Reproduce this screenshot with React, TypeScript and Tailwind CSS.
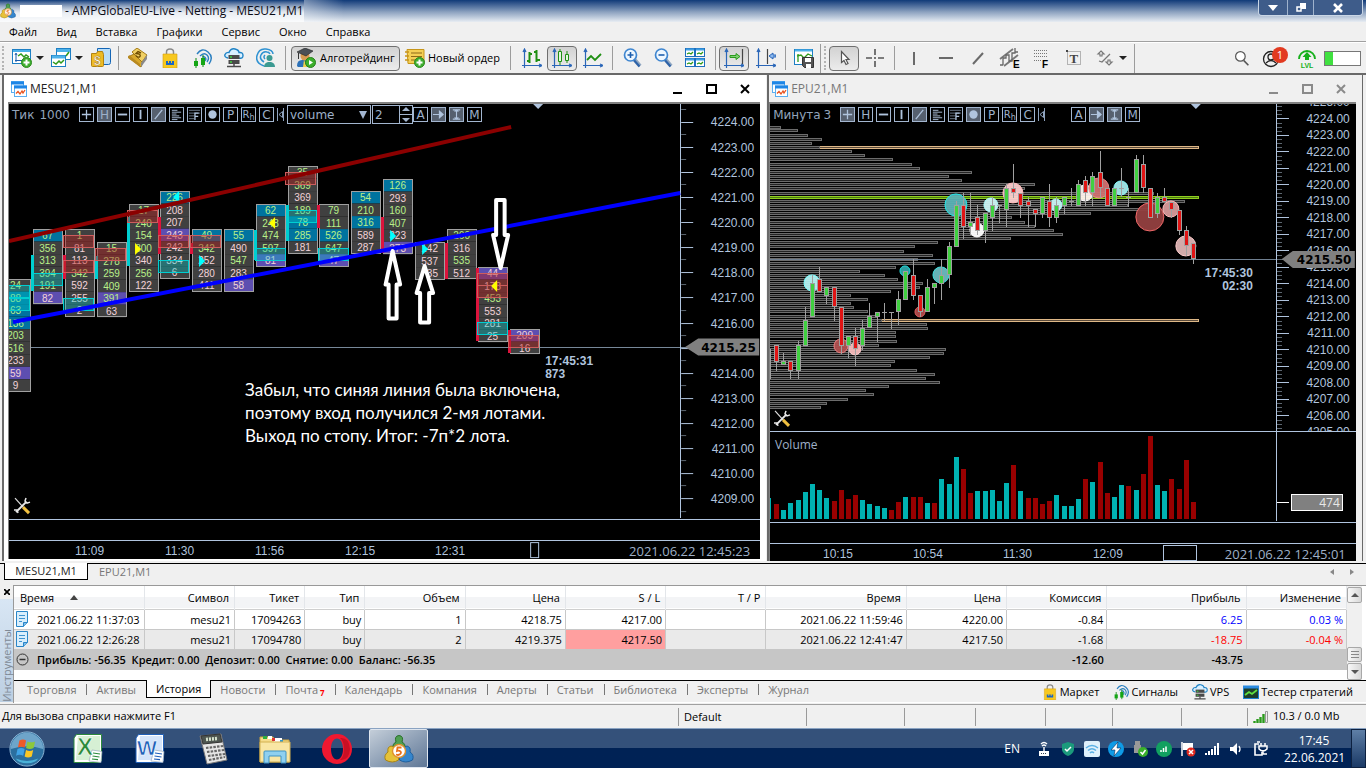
import React from "react";

/* ---------- shared ---------- */

const UI = "font-['Open_Sans','Noto_Sans',sans-serif]";

type IconProps = { children: React.ReactNode; size?: string; className?: string };

function Icon({ children, size = "0 0 20 20", className = "h-5 w-5" }: IconProps) {
  return (
    <svg viewBox={size} className={`shrink-0 ${className}`} aria-hidden="true">
      {children}
    </svg>
  );
}

/* ---------- icons ---------- */

const MetaLogo = ({ className }: { className?: string }) => (
  <Icon size="0 0 30 28" className={className}>
    <path d="M9 14q-1-5 3-7-2-6 3-6.500 5 .5 3 6.500 4 2 3 7z" fill="#4f9f52" stroke="#2a6e2a" />
    <path d="M1.500 25q-2-5 2.500-8-1-5 3-6 5 1 3 6 5 2 4.500 8-6 4-13 0z" fill="#e6c238" stroke="#a98412" />
    <path d="M28.500 25q2-5-2.500-8 1-5-3-6-5 1-3 6-5 2-4.500 8 6 4 13 0z" fill="#3586cd" stroke="#1e5f9e" />
    <circle cx="15" cy="16" r="6.500" fill="#fff" stroke="#e0902c" strokeWidth="1.400" />
    <path d="M17.500 12.500h-4l-.5 3.500c4-1.500 6 3 1 4l-2-.5" fill="none" stroke="#e8701a" strokeWidth="1.800" />
  </Icon>
);

const PlusBall = ({ x, y }: { x: number; y: number }) => (
  <g>
    <circle cx={x} cy={y} r="5" fill="#3fae2f" stroke="#2b8a1e" />
    <path d={`M${x - 3} ${y}h6M${x} ${y - 3}v6`} stroke="#fff" strokeWidth="2" />
  </g>
);

const NewChart = () => (
  <Icon>
    <rect x=".5" y="1.500" width="18" height="14" fill="#fff" stroke="#1d7fc4" />
    <path d="M1 3h17" stroke="#4db2ea" strokeWidth="2" />
    <path d="M4 14V6M3 12.500h13M3 7l1-2 1 2" fill="none" stroke="#1d5fae" />
    <path d="M6 8l3-2 3 3 2-2 3 2" fill="none" stroke="#2f9a1c" strokeWidth="1.500" />
    <PlusBall x={14.500} y={14.500} />
  </Icon>
);

const Windows = () => (
  <Icon>
    <rect x="5.500" y=".5" width="14" height="11" fill="#fff" stroke="#1d7fc4" />
    <path d="M6 2.500h13" stroke="#4db2ea" strokeWidth="3" />
    <path d="M15 8l3-4" fill="none" stroke="#2f9a1c" strokeWidth="1.500" />
    <rect x=".5" y="7.500" width="14" height="11" fill="#fff" stroke="#1d7fc4" />
    <path d="M1 9h13" stroke="#4db2ea" strokeWidth="3" />
    <path d="M2 14l3 2 3-3 2 2 3-3" fill="none" stroke="#2f9a1c" strokeWidth="1.500" />
  </Icon>
);

const Money = () => (
  <Icon>
    <path d="M6.500.5h12q1 0 1 1v13q0 2-2 2h-11z" fill="#b9defa" stroke="#1465b5" />
    <path d="M.5 5.500h5l1-2h5l1 3v11q0 1-1 1h-10q-1 0-1-1z" fill="#edbb26" stroke="#b28212" />
    <text x="3" y="17" fontSize="12" fontWeight="bold" fill="#fff" stroke="#a5760c" strokeWidth=".4" fontFamily="Liberation Sans">$</text>
  </Icon>
);

const Box5 = () => (
  <Icon>
    <path d="M0 9L8 5l7 9-2 5z" fill="#d9a92c" stroke="#a47b18" />
    <path d="M0 10l12 9v-3L1 7z" fill="#b98a20" />
    <path d="M4 4l5-4 10 7-5 7z" fill="#f0cf62" stroke="#a47b18" />
    <path d="M13 19l6-8V7l-6 8z" fill="#8a8a8a" />
    <path d="M13 5l-3-1.500-2 2c3 0 5 1 4 3-1 1-3 1-4-1" fill="none" stroke="#6e4b00" strokeWidth="1.400" />
  </Icon>
);

const Bag = ({ className }: { className?: string }) => (
  <Icon className={className}>
    <path d="M6.500 8V4q0-3 3.500-3t3.500 3v4" fill="none" stroke="#8a8a8a" strokeWidth="1.500" />
    <path d="M3 6h14v14H3z" fill="#f7c820" stroke="#d69e0a" strokeWidth=".6" />
    <path d="M6 17v-4h2v2h1v-2h2v2h1v-2h2v4z" fill="#1b66c4" />
  </Icon>
);

const Signals = ({ className }: { className?: string }) => (
  <Icon className={className}>
    <path d="M5 6q5-7 11-2t1 12M8 8q4-4 7-1t0 7M10.500 9q2-1 3 1t-1 3" fill="none" stroke="#2a7fc0" strokeWidth="1.400" />
    <path d="M4 10v10M11 7v12" stroke="#0a8a0a" />
    <rect x="2" y="13" width="4" height="5" fill="#14a514" />
    <rect x="9" y="10" width="4" height="7" fill="#14a514" />
  </Icon>
);

const Cloud = ({ className }: { className?: string }) => (
  <Icon className={className}>
    <path d="M4 10Q0 9 1 6.500T5 4.500Q7 0 11 1t4 3.500q4-.5 4 3T15 10" fill="#d9f0ff" stroke="#1f83c6" strokeWidth="1.400" />
    <rect x="4.500" y="7" width="11" height="4" fill="#4a4a4a" />
    <rect x="4.500" y="12" width="11" height="4" fill="#4a4a4a" />
    <path d="M6 9h2M6 14h2" stroke="#3fd43f" strokeWidth="1.400" />
    <path d="M10 16v3M3 18.500h14" stroke="#4a4a4a" strokeWidth="1.500" />
  </Icon>
);

const Person = () => (
  <Icon>
    <circle cx="13.500" cy="10" r="3" fill="#3b9a92" />
    <path d="M8 19q0-4 4-5h3q4 1 4 5z" fill="#3b9a92" />
    <path d="M8 18Q-1 15 1 7.500T10 1t7 5M8 14q-5-3-3-7t6-3q2 0 3 2M9 11q-2-2 0-4" fill="none" stroke="#2f92d2" strokeWidth="1.500" />
  </Icon>
);

const Algo = () => (
  <Icon>
    <path d="M1 18q0-6 5-6h6l3 6-2 1H2z" fill="#2c71b8" />
    <path d="M8 12l3 7H7z" fill="#f0d04a" />
    <circle cx="9" cy="8" r="4.500" fill="#d79a50" />
    <path d="M1 4l8-4 8 3-7 5z" fill="#4a4f55" stroke="#222" strokeWidth=".6" />
    <path d="M2.500 5v6" stroke="#333" />
    <circle cx="14.500" cy="14.500" r="5" fill="#3cae2b" stroke="#258019" />
    <path d="M13 12v5l4-2.500z" fill="#fff" />
  </Icon>
);

const NewOrder = () => (
  <Icon>
    <path d="M2 1.500h17v14H3z" fill="#f4cf55" stroke="#c6951a" />
    <path d="M6 5h11M6 8.500h11M6 12h7" stroke="#8b6a18" strokeWidth="1.200" />
    <path d="M0 4h4M0 8h4M0 12h4" stroke="#c6951a" strokeWidth="1.500" />
    <PlusBall x={14.500} y={14.500} />
  </Icon>
);

const Axes = ({ children }: { children: React.ReactNode }) => (
  <Icon>
    <path d="M2.500 20V2M0 17.500h19M1 4l1.500-3L4 4M17 16l3 1.500-3 1.500" fill="none" stroke="#2a66b8" strokeWidth="1.200" />
    {children}
  </Icon>
);

const BarsIcon = () => (
  <Axes><path d="M7.500 4v11M5 13h2.500M7.500 6H10M14.500 2v12M12 4h2.500M14.500 12H18" fill="none" stroke="#1f8f13" strokeWidth="2" /></Axes>
);
const CandlesIcon = () => (
  <Axes>
    <path d="M8 1v16M15 3v12" stroke="#1f8f13" />
    <path d="M6.500 3.500h3v10h-3zM13.500 6.500h3v6h-3z" fill="#e4f7df" stroke="#1f8f13" />
  </Axes>
);
const LineIcon = () => (
  <Axes><path d="M4 12l4-4 4 4 6-6" fill="none" stroke="#1f8f13" strokeWidth="1.800" /></Axes>
);
const ScrollIcon = () => (
  <Axes>
    <path d="M18.500 1v15" stroke="#444" strokeWidth="1.200" />
    <path d="M6 7.500h6v-2l4 3-4 3v-2H6z" fill="#7ed070" stroke="#2a9a1c" />
  </Axes>
);
const ShiftIcon = () => (
  <Axes>
    <path d="M11.500 1v15" stroke="#444" strokeWidth="1.200" />
    <path d="M20 7h-3V5l-4 3 4 3V9h3z" fill="#8bb8ee" stroke="#2a66b8" />
  </Axes>
);

const Lens = ({ minus }: { minus?: boolean }) => (
  <Icon>
    <path d="M11 11l6 7" stroke="#8fa6c0" strokeWidth="4" />
    <path d="M10 11l6.500 7.500" stroke="#2d62a8" strokeWidth="2" />
    <circle cx="7.500" cy="7" r="6" fill="#eef7ff" stroke="#3f86d0" strokeWidth="1.700" />
    <path d={minus ? "M4.500 7h6" : "M4.500 7h6M7.500 4v6"} stroke="#1d5fae" strokeWidth="1.600" />
  </Icon>
);

const GridIcon = () => (
  <Icon>
    {[[0, 0], [10, 0], [0, 10], [10, 10]].map(([x, y]) => (
      <g key={`${x}-${y}`}>
        <rect x={x + 0.5} y={y + 0.5} width="9" height="8" fill="#fff" stroke="#1d6fbe" />
        <path d={`M${x + 1} ${y + 1.5}h8`} stroke="#3f9ee2" strokeWidth="2" />
        <path d={`M${x + 2} ${y + 6}l2-1 2 1 2-2`} fill="none" stroke="#2f9a1c" strokeWidth="1.300" />
      </g>
    ))}
  </Icon>
);

const SaveIcon = () => (
  <Icon>
    <rect x=".5" y="1.500" width="18" height="15" fill="#fff" stroke="#1d7fc4" />
    <path d="M1 2.500h17" stroke="#4db2ea" strokeWidth="2" />
    <path d="M4 14V6M3 8l4-1 3 3 4-4 4 2" fill="none" stroke="#2f9a1c" strokeWidth="1.300" />
    <path d="M8.500 9.500h11v10h-9l-2-2z" fill="#555" stroke="#333" />
    <path d="M11 10h6v4h-6zM12 16h5v4h-5z" fill="#fff" />
  </Icon>
);

const Cursor = () => (
  <Icon><path d="M7.500 3.500v11l2.500-2 2 4 2-1-2-4h3z" fill="#fff" stroke="#555" strokeWidth="1.200" /></Icon>
);
const Cross = () => (
  <Icon><path d="M10 1v6M10 13v6M1 10h6M13 10h6M10 9v2" stroke="#555" strokeWidth="1.600" /></Icon>
);
const Stroke = ({ d }: { d: string }) => (
  <Icon><path d={d} stroke="#6a6a6a" strokeWidth="2" fill="none" /></Icon>
);
const ChannelE = () => (
  <Icon size="0 0 22 22" className="h-[22px] w-[22px]">
    <path d="M1 12L14 2M5 19L19 8" stroke="#777" strokeWidth="1.800" />
    <path d="M4 18v-7h3V8h3v6h3V6h3V1M1 18h3M16 5h3" fill="none" stroke="#666" strokeWidth="1.300" />
    <text x="14" y="21" fontSize="10" fontWeight="bold" fontFamily="Liberation Sans">E</text>
  </Icon>
);
const FiboF = () => (
  <Icon size="0 0 22 22" className="h-[22px] w-[22px]">
    <path d="M3 3.500h14M3 6.500h14M3 9.500h14M3 13.500h8" stroke="#777" strokeDasharray="1 1" />
    <text x="11" y="21" fontSize="10" fontWeight="bold" fontFamily="Liberation Sans">F</text>
  </Icon>
);
const TextT = () => (
  <Icon>
    <rect x="3.500" y="3.500" width="13" height="13" fill="none" stroke="#777" strokeDasharray="1 1" />
    <rect x="2" y="2" width="2" height="2" fill="#444" />
    <text x="5.500" y="15" fontSize="13" fontWeight="bold" fill="#444" fontFamily="Liberation Serif">T</text>
  </Icon>
);
const Shapes = () => (
  <Icon>
    <path d="M6 3l3 3h-2v2H5V6H3zM14 17l3-3h-2v-2h-2v2h-2z" fill="#fff" stroke="#777" strokeWidth="1.200" />
    <path d="M4 13l3 1 8-8" fill="none" stroke="#777" strokeWidth="1.300" />
  </Icon>
);

const ChartWin = () => (
  <Icon size="0 0 16 16" className="h-4 w-4">
    <rect x=".5" y=".5" width="12" height="11" fill="#fff" stroke="#5aaef0" />
    <path d="M0 2h13" stroke="#1e86e6" strokeWidth="3" />
    <rect x="3.500" y="5" width="12" height="10.500" fill="#fff" stroke="#5aaef0" />
    <path d="M3 6h13" stroke="#1e86e6" strokeWidth="3" />
    <path d="M5 12.500l2-2 2 2.500 2-3 1 2 2-3" fill="none" stroke="#e8501c" strokeWidth="1.300" />
  </Icon>
);

const Doc = () => (
  <Icon size="0 0 13 16" className="h-4 w-[13px]">
    <path d="M.5.500h11v11l-4 4h-7z" fill="#d8eefc" stroke="#2a86c8" />
    <path d="M7.500 15.500v-4h4" fill="#7cbbe8" stroke="#2a86c8" />
    <path d="M3 4.500h6M3 7.500h6M3 10.500h3" stroke="#3f93cf" />
  </Icon>
);

/* ---------- title, menu, toolbar ---------- */

function TitleBar() {
  return (
    <header className="flex h-[22px] items-start bg-linear-to-b from-[#0f3a78] via-[#8ea3c0] via-55% to-[#e8edf3]">
      <div className="flex h-[22px] grow items-center">
        <div className="flex h-[22px] items-center bg-linear-to-b from-transparent to-white/80 to-60%">
          <MetaLogo className="h-4 w-4" />
          <span className="ml-1 h-3 w-[42px] bg-white" />
          <h1 className="ml-[3px] text-[12px] leading-[22px] text-[#0a0a14]">- AMPGlobalEU-Live - Netting - MESU21,M1</h1>
        </div>
        <div className="h-[22px] w-10 bg-linear-to-r from-white/40 to-transparent" />
      </div>
      <div className="mr-[3px] flex h-4 overflow-hidden rounded-b border border-t-0 border-[#c9d6e6] text-white">
        <button aria-label="Свернуть" className="flex w-7 items-center justify-center bg-[#3e5c8a]">
          <Icon size="0 0 10 6" className="h-[6px] w-[10px]"><path d="M0 0h10L5 6z" fill="#fff" /></Icon>
        </button>
        <button aria-label="Восстановить" className="flex w-[27px] items-center justify-center border-x border-[#9fb3cd] bg-[#3e5c8a]">
          <Icon size="0 0 10 10" className="h-[10px] w-[10px]"><path d="M4 0h6v6H4z" fill="#fff" /><path d="M1 4h4v4H1z" fill="#3e5c8a" stroke="#fff" strokeWidth="1.500" /></Icon>
        </button>
        <button aria-label="Закрыть" className="flex w-12 items-center justify-center bg-[#3e5c8a]">
          <Icon size="0 0 10 10" className="h-[10px] w-[10px]"><path d="M1 1l8 8M9 1L1 9" stroke="#fff" strokeWidth="2.600" /></Icon>
        </button>
      </div>
    </header>
  );
}

const MENU = ["Файл", "Вид", "Вставка", "Графики", "Сервис", "Окно", "Справка"];

function MenuBar() {
  return (
    <nav className="flex h-[20px] items-center gap-[19px] border-b border-[#a0a0a0] pl-[9px] text-[11px] leading-4">
      {MENU.map((m) => <button key={m}>{m}</button>)}
    </nav>
  );
}

const Sep = () => <span className="mx-[3px] h-6 w-px shrink-0 bg-[#9c9c9c]" />;
const Arrow = () => <Icon size="0 0 8 4" className="h-1 w-2"><path d="M0 0h8L4 4z" fill="#222" /></Icon>;
const Grip = () => <span className="h-6 w-0 shrink-0 border-l-2 border-dotted border-[#b4b4b4]" />;

function Tool({ label, w = "w-8", on, children }: { label: string; w?: string; on?: boolean; children: React.ReactNode }) {
  return (
    <button
      aria-label={label}
      className={`flex h-[25px] shrink-0 items-center justify-center gap-1 ${w} ${on ? "rounded border border-[#6f6f6f] bg-linear-to-b from-[#d2d2d2] to-[#ececec]" : ""}`}
    >
      {children}
    </button>
  );
}

function Toolbar() {
  return (
    <div className="flex h-[31px] items-center border-t border-white text-[11px]">
      <div className="ml-[2px] mr-1 flex"><Grip /></div>
      <Tool label="Новый график" w="w-[39px]"><NewChart /><Arrow /></Tool>
      <Tool label="Окна" w="w-[39px]"><Windows /><Arrow /></Tool>
      <Tool label="Символы" w="w-[29px]"><Money /></Tool>
      <Sep />
      <Tool label="MQL5"><Box5 /></Tool>
      <Tool label="Маркет"><Bag /></Tool>
      <Tool label="Сигналы"><Signals /></Tool>
      <Tool label="VPS"><Cloud /></Tool>
      <Tool label="Сообщество"><Person /></Tool>
      <Sep />
      <button className="ml-[2px] flex h-[25px] w-[109px] shrink-0 items-center gap-1 whitespace-nowrap rounded border border-[#6f6f6f] bg-linear-to-b from-[#d2d2d2] to-[#ececec] pl-1"><Algo />Алготрейдинг</button>
      <button className="flex w-[106px] shrink-0 items-center gap-[3px] whitespace-nowrap pl-[5px]"><NewOrder />Новый ордер</button>
      <span className="ml-1 mr-[5px] h-6 w-px bg-[#9c9c9c]" />
      <Tool label="Бары" w="w-[31px]"><BarsIcon /></Tool>
      <Tool label="Свечи" w="w-[30px]" on><CandlesIcon /></Tool>
      <Tool label="Линия" w="w-[32px]"><LineIcon /></Tool>
      <Sep />
      <Tool label="Увеличить" w="w-[34px]"><Lens /></Tool>
      <Tool label="Уменьшить" w="w-7"><Lens minus /></Tool>
      <Tool label="Плитка" w="w-[34px]"><GridIcon /></Tool>
      <Sep />
      <Tool label="Автопрокрутка" w="w-[30px]" on><ScrollIcon /></Tool>
      <Tool label="Сдвиг" w="w-[33px]"><ShiftIcon /></Tool>
      <Sep />
      <Tool label="Шаблоны" w="w-[30px]"><SaveIcon /></Tool>
      <span className="ml-px mr-[3px] h-[29px] w-px bg-[#9c9c9c]" />
      <Grip />
      <span className="w-[3px]" />
      <Tool label="Курсор" w="w-[30px]" on><Cursor /></Tool>
      <Tool label="Перекрестие"><Cross /></Tool>
      <Sep />
      <Tool label="Вертикальная линия"><Stroke d="M10 4v13" /></Tool>
      <Tool label="Горизонтальная линия"><Stroke d="M3 10h14" /></Tool>
      <Tool label="Трендовая линия"><Stroke d="M5 16L15 5" /></Tool>
      <Tool label="Канал"><ChannelE /></Tool>
      <Tool label="Фибоначчи"><FiboF /></Tool>
      <Tool label="Текст"><TextT /></Tool>
      <Tool label="Объекты" w="w-[42px]"><Shapes /><Arrow /></Tool>
      <span className="ml-[2px] h-[29px] w-px bg-[#9c9c9c]" />
      <div className="ml-auto flex items-center">
        <Tool label="Поиск" w="w-[30px]">
          <Icon className="h-4 w-4"><circle cx="8" cy="8" r="6" fill="#fff" stroke="#555" strokeWidth="1.500" /><path d="M12 13l6 6" stroke="#555" strokeWidth="2" /></Icon>
        </Tool>
        <Tool label="Уведомления" w="w-[36px]">
          <span className="relative flex">
            <Icon className="h-5 w-[26px]" size="0 0 26 20">
              <circle cx="9" cy="11" r="7.500" fill="none" stroke="#222" strokeWidth="1.300" />
              <circle cx="9" cy="9" r="3" fill="none" stroke="#222" strokeWidth="1.300" />
              <path d="M4 15q5-5 10 0" fill="none" stroke="#222" strokeWidth="1.300" />
            </Icon>
            <span className="absolute -top-px right-0 h-4 w-4 rounded-full bg-[#e23a20] text-center text-[11px] leading-4 text-white">1</span>
          </span>
        </Tool>
        <Tool label="Уровень" w="w-7">
          <Icon>
            <path d="M2 11a8 8 0 0 1 16 0" fill="none" stroke="#17b01c" strokeWidth="1.800" />
            <path d="M10 4l4.500 5H12v3H8V9H5.500z" fill="#17b01c" />
            <text x="10" y="20" textAnchor="middle" fontSize="7" fontWeight="bold" fill="#17b01c" fontFamily="Liberation Sans">LVL</text>
          </Icon>
        </Tool>
        <span className="ml-[3px] mr-[5px] flex h-[15px] w-[37px] border border-[#777] bg-white"><span className="w-2 bg-[#40e040]" /></span>
      </div>
    </div>
  );
}

/* ---------- chart overlay controls ---------- */

const GLYPHS: Record<string, React.ReactNode> = {
  plus: <path d="M7 2v10M2 7h10" stroke="#b0c4de" strokeWidth="1.400" />,
  minus: <path d="M2 7h10" stroke="#b0c4de" strokeWidth="2" />,
  bar: <path d="M7 2v10" stroke="#b0c4de" strokeWidth="2" />,
  slash: <path d="M3 12l8-10" stroke="#b0c4de" strokeWidth="1.400" />,
  hist: <path d="M2 2.500h6M2 4.500h10M2 6.500h5M2 8.500h8M2 10.500h10M2 12.500h6" stroke="#b0c4de" />,
  fib: <g><path d="M1 2.500h12M1 5.500h12M1 8.500h6M1 11.500h6" stroke="#6f7d90" /><path d="M7.500 13V5.500h4M7.500 9H11" fill="none" stroke="#b0c4de" strokeWidth="1.400" /></g>,
  dot: <circle cx="7" cy="7" r="4.500" fill="#b0c4de" />,
  right: <path d="M1 7h10M8 3.500L12 7l-4 3.500z" stroke="#b0c4de" fill="#b0c4de" strokeWidth="1.200" />,
  span: <path d="M3 2h8M3 12h8M7 2v10M5 4l2-2 2 2M5 10l2 2 2-2" stroke="#b0c4de" fill="none" strokeWidth="1.200" />,
};

function Key({ k, on }: { k: string; on?: boolean }) {
  return (
    <button
      aria-label={k}
      className={`flex h-[15px] w-[15px] shrink-0 items-center justify-center border border-[#a3b6d0] text-[12px] leading-none text-[#9db0ca] ${on ? "bg-[#56606f]" : "bg-black"}`}
    >
      {GLYPHS[k] ? <Icon size="0 0 14 14" className="h-[13px] w-[13px]">{GLYPHS[k]}</Icon> : k === "Rh" ? <span className="text-[10px]">R<sub className="text-[8px]">h</sub></span> : k}
    </button>
  );
}

const Fold = () => (
  <button aria-label="Свернуть панель" className="flex h-[15px] w-[7px] shrink-0">
    <Icon size="0 0 7 15" className="h-[15px] w-[7px]"><path d="M.5 1v13M6.500 1v13M5.500 4.500L2 7.500l3.500 3z" fill="none" stroke="#8fa3be" /></Icon>
  </button>
);

function KeyRow({ active }: { active: string[] }) {
  return (
    <>
      {["plus", "H", "minus", "bar", "slash", "hist", "fib", "dot", "P", "Rh", "C"].map((k) => (
        <Key key={k} k={k} on={active.includes(k)} />
      ))}
      <Fold />
    </>
  );
}

const OVERLAY = "absolute left-0 top-0 flex h-[21px] items-center gap-[3px] pl-[3px] font-['DejaVu_Sans',sans-serif] text-[12px] text-[#93a4bb]";

/* ---------- left chart ---------- */

/* cell: value, text tone (g/p) and optional fill (b = ask peak, v = bid peak) */
type Cluster = [x: number, top: number, cells: string];
const CLUSTERS: Cluster[] = [
  [1, 279, "24g 88gb 63gb 136gb 203g 516g 233p 59pv 9p"],
  [33, 229, "67gb 356g 313g 394g 191g 82pv"],
  [65, 229, "1g 81p 113p 342g 592p 255p 2p"],
  [97, 242, "15g 278g 259g 409g 391gv 63p"],
  [129, 204, "17g 240g 154g 300g 340p 256g 122p"],
  [160, 191, "226gb 208p 207p 243pv 242p 334p 6p"],
  [192, 229, "49gb 342g 252p 280p 411p"],
  [224, 229, "55gb 490p 547g 283p 58pv"],
  [256, 204, "62gb 248g 474g 597g 81pv"],
  [288, 166, "35g 369g 369p 189g 78gb 285gb 181p"],
  [319, 204, "79g 111g 526gb 647g 47pv"],
  [351, 191, "54gb 210g 316gb 589p 287p"],
  [383, 179, "126gb 293p 160g 407g 323p 373pv"],
  [415, 242, "142p 537p 435p"],
  [447, 229, "260g 316p 535g 512p"],
  [478, 267, "44pv 178p 453g 553p 281p 25p"],
  [510, 329, "209pv 16p"],
];
const RED_ZONES = [[63, 235], [63, 260], [95, 248], [127, 210], [158, 235], [190, 235], [285, 172], [477, 273], [477, 285], [508, 335]];
const TEAL_ZONES = [[32, 273], [-1, 285], [-1, 298], [63, 298], [158, 260], [255, 248], [286, 210], [318, 248], [477, 322]];
const CYAN_SIDES = [[31, 255, 36], [95, 256, 23], [127, 217, 49], [254, 230, 30], [286, 205, 36]];
const RED_SIDES = [[63, 255, 24], [158, 217, 37], [190, 243, 11], [317, 205, 23], [381, 217, 36], [445, 243, 36], [476, 268, 73], [508, 330, 23]];
const AXIS_FONT = "Liberation Sans";
const ROW = 12.53;

function LeftChart() {
  return (
    <svg viewBox="9 104 751 455" className="block h-auto w-full bg-black" role="img" aria-label="MESU21 кластерный график">
      <g shapeRendering="crispEdges">
        <path d="M9 347.500H690" stroke="#778899" />
        <path d="M680.500 104V518" stroke="#b0c4de" />
        <path d="M9 519.500H760M9 540.500H760" stroke="#b0c4de" />
      </g>
      {Array.from({ length: 16 }, (_, i) => {
        const y = Math.round(122 + i * 25.07) + 0.5;
        return (
          <g key={i}>
            <path d={`M681 ${y}h12`} stroke="#b0c4de" />
            <path d={`M681 ${y - 13}h5`} stroke="#5c6670" />
            {i !== 9 && <text x="754" y={y + 4} textAnchor="end" fontSize="12" fill="#b0c4de" fontFamily={AXIS_FONT}>{(4224 - i).toFixed(2)}</text>}
          </g>
        );
      })}
      <path d="M681 511.500h5" stroke="#5c6670" />
      <path d="M533 104h10l-5 5z" fill="#b0c4de" />

      {CLUSTERS.map(([x, top, cells]) => {
        const list = cells.split(" ");
        const w = 29;
        return (
          <g key={x}>
            {list.map((c, i) => (
              <rect key={i} x={x} y={top + i * ROW} width={w} height={ROW} fill={c.endsWith("b") ? "#00739f" : c.endsWith("v") ? "#5d4eb0" : "#404040"} />
            ))}
            <rect x={x + 0.5} y={top + 0.5} width={w} height={Math.round(list.length * ROW) - 1} fill="none" stroke="#a0a0a0" shapeRendering="crispEdges" />
            {list.map((c, i) => (
              <text key={i} x={x + 14.5} y={Math.round(top + i * ROW + 10)} textAnchor="middle" fontSize="10" fontFamily={AXIS_FONT} fill={c.includes("g") ? "#b8f088" : "#f3d3d8"}>
                {parseInt(c, 10)}
              </text>
            ))}
          </g>
        );
      })}
      <g shapeRendering="crispEdges">
        {CYAN_SIDES.map(([x, y, h]) => <rect key={`${x}${y}`} x={x} y={y} width="3" height={h} fill="#00ced1" />)}
        {RED_SIDES.map(([x, y, h]) => <rect key={`${x}${y}`} x={x} y={y} width="3" height={h} fill="#dc143c" />)}
        {RED_ZONES.map(([x, y]) => <rect key={`${x}${y}`} x={x + 0.5} y={y + 0.5} width="30" height="12" fill="#b02020" fillOpacity=".45" stroke="#cd5c5c" />)}
        {TEAL_ZONES.map(([x, y]) => <rect key={`${x}${y}`} x={x + 0.5} y={y + 0.5} width="30" height="12" fill="#00ced1" fillOpacity=".35" stroke="#00ced1" />)}
      </g>
      <path d="M135 243v12l6-6zM275 217v12l-6-6zM497 280v12l-6-6z" fill="#ffff00" />
      <path d="M179 191v12l-6-6zM199 255v12l6-6zM390 230v12l6-6zM422 243v12l6-6z" fill="#00ffff" />
      <path d="M9 241L511 127" stroke="#8b0000" strokeWidth="4" />
      <path d="M13 322L680 193" stroke="#0000ff" strokeWidth="4" />
      <g fill="#000" stroke="#fff" strokeWidth="4" strokeLinejoin="round">
        <path d="M392.500 251L385.500 284.500h3V318.500h8V284.500h3.500z" />
        <path d="M424.500 266L416.500 293h3.500V322.500h9V293h4z" />
        <path d="M500.500 268L493 235h3V200h8.500v35h3.500z" />
      </g>
      <path d="M685 347l13-8.500h61v17h-61z" fill="#808080" />
      <text x="701" y="352" fontSize="12" fontWeight="bold" fontFamily="DejaVu Sans">4215.25</text>
      <g fontSize="12" fontWeight="bold" fill="#b0c4de" fontFamily="Liberation Sans">
        <text x="545" y="365">17:45:31</text>
        <text x="545" y="378">873</text>
      </g>
      <g fontSize="17" fill="#fff" fontFamily="Lato">
        <text x="245" y="396">Забыл, что синяя линия была включена,</text>
        <text x="245" y="419">поэтому вход получился 2-мя лотами.</text>
        <text x="245" y="442">Выход по стопу. Итог: -7п*2 лота.</text>
      </g>
      <g fontSize="12" fill="#b0c4de" fontFamily={AXIS_FONT}>
        {["11:09", "11:30", "11:56", "12:15", "12:31"].map((t, i) => <text key={t} x={75 + i * 90} y="555">{t}</text>)}
      </g>
      <rect x="530.500" y="542.500" width="8" height="15" fill="none" stroke="#b0c4de" />
      <text x="750" y="556" textAnchor="end" fontSize="13" fill="#9fb0c8" fontFamily="Open Sans">2021.06.22 12:45:23</text>
      <Wrench x={14} y={498} />
    </svg>
  );
}

const Wrench = ({ x, y }: { x: number; y: number }) => (
  <g transform={`translate(${x} ${y})`} fill="none">
    <path d="M1 0l9 10" stroke="#ddd" strokeWidth="1.200" />
    <path d="M9 9l6 6" stroke="#f0c040" strokeWidth="3" />
    <path d="M2 14L12 4" stroke="#e8e8e8" strokeWidth="2" />
    <path d="M12 0l-1 3 2 2 3-1M0 12l3 0 1 3" stroke="#e8e8e8" strokeWidth="1.500" />
  </g>
);

/* ---------- right chart ---------- */

/* profile rows: vertical position (thirds of a pixel) and right edge */
const PROFILE: [number, number][] = [
  [82, 781], [91, 798], [106, 808], [118, 822], [130, 812], [142, 820], [154, 852], [166, 865], [178, 893], [193, 912], [205, 920],
  [217, 972], [229, 949], [241, 962], [253, 1035], [265, 1025], [280, 1154], [304, 1185], [316, 1128], [328, 1150], [340, 1091],
  [352, 1012], [367, 1025], [379, 1035], [391, 1054], [403, 1063], [415, 1011], [427, 938], [439, 915], [454, 904], [466, 933],
  [478, 918], [490, 935], [502, 896], [514, 860], [526, 885], [538, 898], [550, 923], [562, 920], [574, 891], [586, 851], [598, 868],
  [610, 851], [622, 854], [634, 868], [649, 878], [661, 882], [673, 927], [685, 928], [697, 896], [709, 896], [724, 897], [736, 879],
  [748, 946], [760, 944], [772, 930], [784, 895], [796, 891], [811, 917], [823, 935], [835, 926], [847, 940], [859, 889], [871, 866],
  [883, 874], [898, 848], [910, 827], [922, 821],
];
/* wick top, body top, body bottom, wick bottom (thirds of a pixel); equal body values make a doji */
const CANDLES =
  "735 735 785 812 R|759 783 796 796 G|783 783 812 836 R|723 735 812 836 G|620 660 737 737 G|525 549 650 650 G|501 537 575 575 R|561 561 587 612 G|561 561 622 662 R|622 622 737 762 R|709 709 737 774 G|684 709 748 798 R|660 684 737 750 G|609 648 685 685 G|636 636 650 725 G|609 636 636 662 D|636 636 636 687 D|573 597 637 675 G|513 513 599 599 G|477 525 587 600 R|585 585 637 650 R|537 561 637 637 G|549 549 563 612 G|477 525 551 600 G|426 438 526 563 G|303 315 440 440 G|279 315 380 417 R|279 366 380 405 G|315 351 392 405 R|339 339 392 430 G|291 315 353 393 G|315 315 315 369 D|253 265 329 380 G|192 265 280 293 R|279 279 317 353 R|291 303 317 380 R|327 327 341 380 R|291 291 341 353 G|253 303 353 380 R|291 315 353 369 G|291 291 317 341 G|265 303 303 317 D|240 253 317 317 G|228 240 280 317 R|217 228 280 317 G|153 217 265 293 R|265 265 317 317 R|265 265 317 317 G|204 265 265 291 D|265 291 291 320 D|165 177 280 280 G|165 192 265 280 R|265 265 353 353 R|279 291 341 353 G|265 291 305 305 R|305 305 329 353 R|329 329 392 405 R|378 390 438 467 R|428 428 478 491 R"
    .split("|").map((c) => c.split(" "));
const VOLUMES =
  "15R 9T 16T 19T 27T 35T 29T 21T 18R 29R 20R 24R 19T 15T 13T 11T 9R 17R 22T 22R 22R 16T 16R 40T 35T 62T 50R 26R 28T 28T 29T 18T 36T 54R 28T 21R 21R 15R 18R 24T 13T 13T 20T 40R 37T 57R 26R 22T 34T 33R 29T 45R 83R 34T 28T 40R 30R 59R 17R".split(" ");
const BUBBLES: [number, number, number, string, string][] = [
  [812, 283, 8, "#b4f2f2", "#7ff"], [841, 346, 7, "#b05050", "#f08080"], [855, 349, 6, "#f7bcbc", "#fcc"], [905, 271, 5, "#30a5a8", "#20e0e0"],
  [920, 312, 5, "#b04a4a", "#e06060"], [941, 275, 8, "#6cbcc0", "#40e0e0"], [956, 205, 11, "#5bb2b6", "#20e8e8"], [977, 230, 7, "#fff", "#fff"],
  [991, 205, 7, "#cdf6f6", "#aff"], [1013, 193, 10, "#fccccc", "#ffbcbc"], [1056, 205, 6, "#c8f4f6", "#aff"], [1085, 193, 8, "#fff0ee", "#fff"],
  [1099, 188, 10, "#d07272", "#e88"], [1121, 188, 7, "#a4e8ea", "#8ff"], [1150, 217, 14, "#934040", "#f06868"], [1171, 209, 8, "#d89a9a", "#fbb"], [1186, 246, 10, "#dcb4b4", "#fcc"],
];
const cx = (i: number) => Math.round(776 + i * 7.19);
const yy = (v: number) => Math.round(100 + v / 3);

function RightChart() {
  return (
    <svg viewBox="770 104 586 457" className="block h-auto w-full bg-black" role="img" aria-label="EPU21 график">
      <g shapeRendering="crispEdges">
        {PROFILE.map(([v, x]) => <rect key={v} x="769.500" y={yy(v) - 0.5} width={x - 770} height="2" fill="#242424" stroke="#6c6c6c" />)}
        <path d="M770 259.500H1284" stroke="#6f7f90" />
        {[[820, 147], [882, 320]].map(([x, y]) => <g key={x}><path d={`M${x} ${y + 0.5}H1199`} stroke="#deb887" strokeWidth="3" /><path d={`M${x} ${y + 0.5}H1198`} stroke="#5a4a3a" /></g>)}
        <path d="M770 197.500H1199" stroke="#8fcf20" strokeWidth="3" />
        <path d="M770 197.500H1198" stroke="#4f7a10" />
      </g>
      {BUBBLES.map(([x, y, r, f, s]) => <circle key={x} cx={x} cy={y} r={r} fill={f} fillOpacity=".95" stroke={s} />)}
      <g shapeRendering="crispEdges">
        <path d="M770.500 349v30" stroke="#a0a0a0" />
        {CANDLES.map(([a, b, c, d, k], i) => {
          const x = cx(i);
          return (
            <g key={i}>
              <path d={`M${x + 0.5} ${yy(+a)}V${yy(+d)}`} stroke="#a0a0a0" />
              {k === "D" ? <path d={`M${x - 2} ${yy(+b) + 0.5}h5`} stroke="#a0a0a0" /> : (
                <rect x={x - 1.5} y={yy(+b) + 0.5} width="4" height={Math.max(3, yy(+c) - yy(+b) - 1)} fill={k === "G" ? "#40d040" : "#e01414"} stroke="#a0a0a0" />
              )}
            </g>
          );
        })}
        {VOLUMES.map((v, i) => {
          const h = parseInt(v, 10);
          return <rect key={i} x={cx(i) - 2} y={519 - h} width="5" height={h} fill={v.endsWith("T") ? "#00b2b2" : "#990000"} />;
        })}
        <rect x="770" y="498" width="1" height="21" fill="#00b2b2" />
        <path d="M1276.500 104V521M770 431.500H1356M770 522.500H1356M770 543.500H1356" stroke="#b0c4de" />
        {Array.from({ length: 79 }, (_, i) => <path key={i} d={`M1277 ${Math.round(106 + i * 4.125) + 0.5}h5`} stroke="#5c6670" />)}
        {Array.from({ length: 19 }, (_, i) => <path key={i} d={`M1277 ${Math.round(118 + i * 16.5) + 0.5}h12`} stroke="#b0c4de" />)}
        <path d="M1277 502.500h12" stroke="#fff" />
        <rect x="1291.500" y="494.500" width="51" height="16" fill="#808080" stroke="#fff" />
        <rect x="1163.500" y="545.500" width="33" height="15" fill="none" stroke="#b0c4de" />
      </g>
      <path d="M1191 104h10l-5 5z" fill="#b0c4de" />
      <clipPath id="axis-clip"><rect x="1278" y="104" width="78" height="327" /></clipPath>
      <g clipPath="url(#axis-clip)" fontSize="12" fill="#b0c4de" fontFamily={AXIS_FONT}>
        {Array.from({ length: 21 }, (_, i) => (
          <text key={i} x="1350" y={Math.round(106 + i * 16.5)} textAnchor="end">{(4225 - i).toFixed(2)}</text>
        ))}
      </g>
      <path d="M1282 259l11-8h62v17h-62z" fill="#808080" />
      <text x="1297" y="264" fontSize="12" fontWeight="bold" fontFamily="DejaVu Sans">4215.50</text>
      <g fontSize="12" fontWeight="bold" fill="#b0c4de" fontFamily="Liberation Sans" textAnchor="end">
        <text x="1253" y="277">17:45:30</text>
        <text x="1253" y="290">02:30</text>
      </g>
      <text x="775" y="449" fontSize="12" fill="#9fb0c8" fontFamily="Open Sans">Volume</text>
      <text x="1340" y="507" fontSize="12" fill="#e8e8e8" textAnchor="end" fontFamily="Open Sans">474</text>
      <g fontSize="12" fill="#b0c4de" fontFamily={AXIS_FONT}>
        {["10:15", "10:54", "11:30", "12:09"].map((t, i) => <text key={t} x={823 + i * 90} y="558">{t}</text>)}
      </g>
      <text x="1346" y="559" textAnchor="end" fontSize="13" fill="#9fb0c8" fontFamily="Open Sans">2021.06.22 12:45:01</text>
      <Wrench x={774} y={411} />
    </svg>
  );
}

/* ---------- chart windows ---------- */

function WindowHead({ title, active }: { title: string; active?: boolean }) {
  const c = active ? "#000" : "#8a8a8a";
  return (
    <div className={`flex h-[27px] items-center gap-1 pl-[3px] text-[12px] ${active ? "text-[#222]" : "text-[#777]"}`}>
      <ChartWin />
      <h2 className="-ml-px grow">{title}</h2>
      {[["Свернуть", "M1 10h9"], ["Развернуть", "M1 2h9v8H1z"], ["Закрыть", "M1 2l8 8M9 2L1 10"]].map(([l, d]) => (
        <button key={l} aria-label={l} className="flex w-[30px] justify-center">
          <Icon size="0 0 11 12" className="h-3 w-[11px]"><path d={d} fill="none" stroke={c} strokeWidth="2" /></Icon>
        </button>
      ))}
    </div>
  );
}

function Workspace() {
  return (
    <main className="flex border-t-2 border-[#696969] bg-[#f0f0f0] pb-[2px] pl-[2px] pr-[3px]">
      <section className="flex-[764_1_0%] border-l-2 border-[#696969] bg-white pb-[2px] pl-1 pr-[6px]">
        <WindowHead title="MESU21,M1" active />
        <div className="relative border-l border-t-2 border-[#808080]">
          <LeftChart />
          <div className={OVERLAY}>
            <span className="flex w-16 justify-between pr-[6px]"><span>Тик</span><span>1000</span></span>
            <KeyRow active={["H", "slash"]} />
            <div className="flex items-center">
              <label className="relative flex items-center">
                <span className="sr-only">Тип данных</span>
                <select className="h-[19px] w-[84px] appearance-none border border-[#a3b6d0] bg-black pl-[2px] text-[12px] leading-none text-[#9db0ca]"><option>volume</option></select>
                <Icon size="0 0 8 8" className="pointer-events-none absolute right-1 h-2 w-2"><path d="M0 0h8L4 8z" fill="#a3b6d0" /></Icon>
              </label>
              <label className="ml-px flex border border-[#a3b6d0]">
                <span className="sr-only">Порог</span>
                <input defaultValue="2" className="h-[17px] w-[26px] bg-black pl-[2px] text-[12px] text-[#9db0ca]" />
                <span className="flex w-[13px] flex-col items-center justify-around border-l border-[#a3b6d0] bg-black">
                  <Icon size="0 0 8 4" className="h-1 w-2"><path d="M0 4h8L4 0z" fill="#a3b6d0" /></Icon>
                  <span className="h-px w-full bg-[#a3b6d0]" />
                  <Icon size="0 0 8 4" className="h-1 w-2"><path d="M0 0h8L4 4z" fill="#a3b6d0" /></Icon>
                </span>
              </label>
              <Key k="A" />
            </div>
            <Key k="right" on /><Key k="span" on /><Key k="M" />
          </div>
        </div>
      </section>
      <section className="ml-px flex-[596_1_0%] border-l-2 border-r border-[#696969] pr-[6px]">
        <WindowHead title="EPU21,M1" />
        <div className="relative border-l border-t-2 border-[#808080]">
          <RightChart />
          <div className={OVERLAY}>
            <span className="flex w-16 justify-between pr-[6px]"><span>Минута</span><span>3</span></span>
            <KeyRow active={["plus", "slash", "dot"]} />
            <span className="w-5" />
            <Key k="A" /><Key k="right" on /><Key k="span" on /><Key k="M" />
          </div>
        </div>
      </section>
    </main>
  );
}

function ChartTabs() {
  return (
    <div className="flex h-[18px] text-[11px]">
      <span className="w-1 border-t border-black" />
      <button className="h-[17px] w-[84px] border border-t-0 border-black bg-white text-[#222]">MESU21,M1</button>
      <div className="flex h-[17px] grow items-center border-t border-black pl-[11px] text-[#777]">
        <button>EPU21,M1</button>
        <span className="ml-auto mr-3 flex gap-4">
          <Icon size="0 0 4 6" className="h-[6px] w-1"><path d="M4 0v6L0 3z" fill="#888" /></Icon>
          <Icon size="0 0 4 6" className="h-[6px] w-1"><path d="M0 0v6l4-3z" fill="#888" /></Icon>
        </span>
      </div>
    </div>
  );
}

/* ---------- trade history ---------- */

const COLUMNS: [string, string][] = [
  ["Время", "w-[130px]"], ["Символ", "w-[90px]"], ["Тикет", "w-[70px]"], ["Тип", "w-[60px]"], ["Объем", "w-[100px]"], ["Цена", "w-[100px]"],
  ["S / L", "w-[100px]"], ["T / P", "w-[100px]"], ["Время", "w-[140px]"], ["Цена", "w-[100px]"], ["Комиссия", "w-[100px]"], ["Прибыль", "w-[139px]"], ["Изменение", "w-[100px]"],
];
const DEALS = [
  ["2021.06.22 11:37:03", "mesu21", "17094263", "buy", "1", "4218.75", "4217.00", "", "2021.06.22 11:59:46", "4220.00", "-0.84", "6.25", "0.03 %"],
  ["2021.06.22 12:26:28", "mesu21", "17094780", "buy", "2", "4219.375", "4217.50", "", "2021.06.22 12:41:47", "4217.50", "-1.68", "-18.75", "-0.04 %"],
];
const PANEL_TABS = ["Торговля", "Активы", "История", "Новости", "Почта", "Календарь", "Компания", "Алерты", "Статьи", "Библиотека", "Эксперты", "Журнал"];

function History() {
  return (
    <table className="w-full table-fixed border-collapse text-[11px] leading-none">
      <thead>
        <tr className="h-[23px] border-b border-[#cfcfcf] bg-linear-to-b from-white from-50% to-[#f3f4f6] to-50%">
          {COLUMNS.map(([c, w], i) => (
            <th key={i} scope="col" className={`${w} border-r border-[#e3e6ea] p-0 font-normal ${i === 0 ? "pl-[6px] text-left" : "pr-[5px] text-right"}`}>
              {i === 0 ? <span className="flex items-center gap-4">{c}<Icon size="0 0 8 5" className="h-[5px] w-2"><path d="M0 5h8L4 0z" fill="#444" /></Icon></span> : c}
            </th>
          ))}
        </tr>
      </thead>
      <tbody>
        {DEALS.map((row, r) => (
          <tr key={r} className={`h-5 ${r ? "border-t border-[#c8c8c8] bg-[#eaeaea]" : "bg-white"}`}>
            {row.map((v, i) => (
              <td key={i} className={`border-r border-[#c8c8c8] p-0 pr-[3px] text-right ${r === 1 && i === 6 ? "bg-[#ff9f9f]" : ""} ${i > 10 ? (r ? "text-[#ff0000]" : "text-[#0000ff]") : ""}`}>
                {i === 0 ? <span className="flex items-center gap-2 pl-[2px]"><Doc />{v}</span> : v}
              </td>
            ))}
          </tr>
        ))}
        <tr className="h-[21px] bg-[#c6c6c6] font-semibold">
          <td colSpan={10} className="p-0">
            <span className="flex items-center gap-2 whitespace-pre pl-[2px]">
              <Icon size="0 0 13 13" className="h-[13px] w-[13px]"><circle cx="6.500" cy="6.500" r="5.500" fill="none" stroke="#333" /><path d="M3.500 6.500h6" stroke="#333" strokeWidth="1.500" /></Icon>
              {"Прибыль: -56.35  Кредит: 0.00  Депозит: 0.00  Снятие: 0.00  Баланс: -56.35"}
            </span>
          </td>
          <td className="p-0 pr-[3px] text-right">-12.60</td>
          <td className="p-0 pr-[3px] text-right">-43.75</td>
          <td />
        </tr>
      </tbody>
    </table>
  );
}

const SCROLL_BTN = "flex w-[15px] items-center justify-center rounded-[2px] border border-[#a8a8a8] bg-linear-to-r from-[#f8f8f8] to-[#d8d8d8]";

function Terminal() {
  return (
    <section className="flex pt-1">
      <aside className="flex w-[15px] flex-col items-center pb-px">
        <button aria-label="Закрыть панель" className="flex h-[14px] items-center">
          <Icon size="0 0 7 7" className="h-[6px] w-[6px]"><path d="M0 0l7 7M7 0L0 7" stroke="#000" strokeWidth="2" /></Icon>
        </button>
        <div className="flex w-[13px] grow items-center bg-linear-to-b from-[#d8e6f4] to-[#bccfe2]">
          <span className="mt-auto rotate-180 text-[11px] leading-[13px] text-[#808a96] [writing-mode:vertical-rl]">Инструменты</span>
        </div>
      </aside>
      <div className="min-w-0 grow border-l border-t border-[#999]">
        <div className="flex bg-white">
          <div className="min-w-0 grow pb-[10px]"><History /></div>
          <div className="mr-1 flex w-4 flex-col items-center bg-[#f0f0f0] pt-px">
            <button aria-label="Вверх" className={`${SCROLL_BTN} h-4`}><Arrow2 up /></button>
            <button aria-label="Ползунок" className={`${SCROLL_BTN} mt-auto h-[15px]`}>
              <Icon size="0 0 8 7" className="h-[7px] w-2"><path d="M0 .5h8M0 3.500h8M0 6.500h8" stroke="#888" /></Icon>
            </button>
            <button aria-label="Вниз" className={`${SCROLL_BTN} mt-px h-[17px]`}><Arrow2 /></button>
          </div>
        </div>
        <div className="flex h-[23px] items-start border-b border-white text-[11px] leading-4">
          <span className="w-1 border-t border-black" />
          {PANEL_TABS.map((t, i) =>
            t === "История" ? (
              <button key={t} className="h-[18px] border-x border-b border-black bg-white px-[9px]">{t}</button>
            ) : (
              <button key={t} className="flex h-[18px] items-center border-t border-black text-[#777]">
                <span className="pl-[9px] pr-[10px]">{t}{t === "Почта" && <sub className="ml-[2px] text-[8px] leading-none font-bold text-[#ff0000]">7</sub>}</span>
                {i !== 1 && i !== 11 && <span className="h-[11px] w-px bg-[#777]" />}
              </button>
            ),
          )}
          <div className="flex h-[18px] grow justify-end border-t border-black pr-[13px]">
            <div className="flex items-center gap-[14px] pt-[5px]">
              {[["Маркет", <Bag key="b" className="h-4 w-4" />], ["Сигналы", <Signals key="s" className="h-4 w-4" />], ["VPS", <Cloud key="c" className="h-4 w-4" />], ["Тестер стратегий", <Tester key="t" />]].map(([t, ic], i) => (
                <button key={i} className="flex items-center gap-[2px]">{ic}{t}</button>
              ))}
            </div>
          </div>
        </div>
      </div>
    </section>
  );
}

const Arrow2 = ({ up }: { up?: boolean }) => (
  <Icon size="0 0 8 4" className="h-1 w-2"><path d={up ? "M0 4h8L4 0z" : "M0 0h8L4 4z"} fill="#555" /></Icon>
);

const Tester = () => (
  <Icon size="0 0 16 16" className="h-4 w-4">
    <rect x=".5" y="2.500" width="15" height="12" fill="#1d3d2b" stroke="#1d7fd0" />
    <path d="M0 3h16" stroke="#2a8ae0" strokeWidth="3" />
    <path d="M2 11l4-3 3 2 5-4" fill="none" stroke="#5fe040" strokeWidth="1.800" />
  </Icon>
);

/* ---------- status bar & taskbar ---------- */

function StatusBar() {
  return (
    <footer className="flex h-6 items-center border-t border-[#a0a0a0] text-[11px]">
      <span className="w-[678px] pl-[2px]">Для вызова справки нажмите F1</span>
      <span className="w-[128px] border-l border-[#999] pl-[5px] leading-[18px]">Default</span>
      {["w-[98px]", "w-[71px]", "w-[70px]", "w-[67px]", "w-[69px]"].map((w, i) => <span key={i} className={`${w} h-[18px] border-l border-[#999]`} />)}
      <span className="h-[18px] w-[66px] border-l border-[#999]" />
      <span className="flex h-[18px] grow items-center gap-1 whitespace-nowrap border-l border-[#999] pl-[5px]">
        <Icon size="0 0 16 12" className="h-3 w-4"><path d="M1.500 12v-2M4.500 12V8M7.500 12V6M10.500 12V3" stroke="#2a9a1c" strokeWidth="2.400" /><path d="M12.500.5h2v11h-2z" fill="#eee" stroke="#999" /></Icon>
        10.3 / 0.0 Mb
      </span>
    </footer>
  );
}

const Orb = () => (
  <Icon size="0 0 40 40" className="h-[38px] w-[38px]">
    <circle cx="20" cy="20" r="18" fill="#2b6f9f" stroke="#8fb8d8" />
    <path d="M3 20a17 17 0 0 1 34 0q-17-6-34 0z" fill="#7fb3d4" opacity=".8" />
    <path d="M8 30a13 8 0 0 0 24 0q-12 5-24 0z" fill="#5fe0ff" opacity=".6" />
    <path d="M12 11q4-2 7 0l-1.500 7.500q-4-2-7 0z" fill="#ee5a28" />
    <path d="M20.500 12q4 2 8 0L27 19q-4 2-8 0z" fill="#8cc83c" />
    <path d="M10 20q4-2 7.500 0L16 27q-4-2-7.500 0z" fill="#3fa3e6" />
    <path d="M19 21q4 2 7.500 0L25 28q-4 2-7.500 0z" fill="#fbc724" />
  </Icon>
);

const OfficeDoc = ({ letter, tone, light }: { letter: string; tone: string; light: string }) => (
  <Icon size="0 0 30 30" className="h-[30px] w-[30px]">
    <path d="M3.500.5h25v26l-2 2H1V4z" fill="#fff" stroke={tone} />
    <path d="M5 2h22v24H3z" fill={light} />
    <path d="M19 16l10 1.500-1 11L16 27z" fill="#fff" stroke="#9ab" strokeWidth=".7" />
    <path d="M20 19l7 1M19.500 22l7 1M19 25l6 .7" stroke={tone} strokeWidth="1.200" />
    <text x={letter === "W" ? 2 : 4} y="21" fontSize={letter === "W" ? 21 : 24} fontWeight="bold" fill={tone} stroke="#fff" strokeWidth=".6" fontFamily="Liberation Sans">{letter}</text>
  </Icon>
);

const Calc = () => (
  <Icon size="0 0 30 32" className="h-8 w-[30px]">
    <path d="M1 3l21-2 6 26-20 4z" fill="#e6e6e6" stroke="#777" />
    <path d="M2 3l19-2 2 8-19 2z" fill="#4d5550" stroke="#333" />
    <path d="M7 6.500l12-1" stroke="#d5e2cd" strokeWidth="3.500" strokeDasharray="2 1" />
    <path d="M7 15l17-2M8 19l17-2M9 23l17-2M10 27l16-3" stroke="#666" strokeWidth="2.200" strokeDasharray="2.500 1.200" />
  </Icon>
);

const Folder = () => (
  <Icon size="0 0 32 30" className="h-[30px] w-8">
    <path d="M1 3h13l2 3h14v22H1z" fill="#f5dc8c" stroke="#c9a33c" />
    <path d="M4 2h4v3H4z" fill="#2fae3f" /><path d="M9 2h4v3H9zM15 4h8v4h-8z" fill="#fff" /><path d="M13 4h3v3h-3z" fill="#d33" /><path d="M21 6h3v2h-3z" fill="#39c" />
    <path d="M1 8h30v20H1z" fill="#f9e6a4" stroke="#d2b050" />
    <path d="M5 29V18q0-1 1-1h20q1 0 1 1v11h-5v-7H10v7z" fill="#8fd0f0" stroke="#3f93c4" />
  </Icon>
);

const Opera = () => (
  <Icon size="0 0 30 30" className="h-[30px] w-[30px]">
    <path fillRule="evenodd" d="M15 0a15 15 0 1 0 0 30 15 15 0 1 0 0-30zM15 4.500c3.600 0 6 4.500 6 10.500s-2.400 10.500-6 10.500S9 21 9 15s2.400-10.500 6-10.500z" fill="#f01830" />
    <path d="M18 4q9-1 10 11-1 12-10 11 4-3 4-11T18 4z" fill="#b80c20" opacity=".7" />
  </Icon>
);

const TRAY: [string, React.ReactNode][] = [
  ["Роутер", <g key="a"><path d="M3 10h10v5H3z" fill="#fff" /><path d="M8 10V6M5 3q3-3 6 0M6 5q2-2 4 0" fill="none" stroke="#fff" strokeWidth="1.400" /><path d="M5 12.500h6" stroke="#345" strokeDasharray="1 1" /></g>],
  ["Защита", <g key="a"><path d="M8 1l6 2v6q-1 4-6 6-5-2-6-6V3z" fill="#1b9a7c" /><path d="M5 8l2 2 4-4" fill="none" stroke="#fff" strokeWidth="1.500" /></g>],
  ["Wi-Fi", <g key="a"><rect width="16" height="16" rx="2" fill="#dff0fb" /><path d="M2 7q6-5 12 0M4 9.500q4-3.500 8 0M6 12q2-2 4 0" fill="none" stroke="#5ab0e4" strokeWidth="1.500" /></g>],
  ["Питание", <g key="a"><circle cx="8" cy="8" r="8" fill="#0f9be6" /><path d="M10 1L3 9h4l-1 6 7-8H9z" fill="#fff" stroke="#0b2a56" strokeWidth=".6" /></g>],
  ["USB", <g key="a"><path d="M3 0h5v4H3zM2 4h7v8H2z" fill="#999" /><circle cx="11" cy="11" r="5" fill="#39b02c" /><path d="M8.500 11l2 2 3-4" fill="none" stroke="#fff" strokeWidth="1.500" /></g>],
  ["Сеть", <g key="a"><circle cx="8" cy="8" r="8" fill="#12a060" /><path d="M5 11V9M7.500 11V7M10 11V5.500" stroke="#fff" strokeWidth="1.500" /></g>],
  ["Центр поддержки", <g key="a"><path d="M2 1v14" stroke="#fff" strokeWidth="1.500" /><path d="M3 2h10v7H3z" fill="#fff" /><circle cx="11" cy="11" r="4.500" fill="#e02a20" /><path d="M9 9l4 4M13 9l-4 4" stroke="#fff" strokeWidth="1.500" /></g>],
  ["Сигнал", <path key="a" d="M2 14v-2M5 14v-4M8 14V8M11 14V5M14 14V2" stroke="#fff" strokeWidth="2" />],
  ["Звук", <g key="a"><path d="M2 6h3l4-4v12l-4-4H2z" fill="#fff" /><path d="M11 5q2 3 0 6" fill="none" stroke="#fff" strokeWidth="1.300" /></g>],
  ["Батарея", <g key="a"><path d="M7 3H3v11h7v-3M5 1h3" fill="none" stroke="#fff" strokeWidth="1.600" /><path d="M7 5h8v3q-4 4-8 0zM9 2v3M13 2v3M11 9v4h4" fill="none" stroke="#fff" strokeWidth="1.500" /></g>],
];

function Taskbar() {
  return (
    <footer className="flex h-10 items-center border-t border-[#8aa3c2] bg-linear-to-b from-[#34517a] from-50% to-[#002255] to-50% text-[12px] text-white">
      <button aria-label="Пуск" className="ml-2"><Orb /></button>
      <button aria-label="Excel" className="ml-[27px]"><OfficeDoc letter="X" tone="#2c8a3c" light="#d6f0d4" /></button>
      <button aria-label="Word" className="ml-8"><OfficeDoc letter="W" tone="#1f5fb8" light="#d4e4fa" /></button>
      <button aria-label="Калькулятор" className="ml-[34px]"><Calc /></button>
      <button aria-label="Проводник" className="ml-[30px]"><Folder /></button>
      <button aria-label="Opera" className="ml-[31px]"><Opera /></button>
      <button aria-label="MetaTrader 5" className="ml-[17px] flex h-[39px] w-[59px] items-center justify-center rounded-[2px] border border-[#dfe6ef] bg-linear-to-br from-[#c4ced9] to-[#5f7796]">
        <MetaLogo className="h-[28px] w-[30px]" />
      </button>
      <span className="ml-auto">EN</span>
      <div className="ml-4 flex gap-2">
        {TRAY.map(([l, g]) => <button key={l} aria-label={l}><Icon size="0 0 16 16" className="h-4 w-4">{g}</Icon></button>)}
      </div>
      <time className="ml-4 w-[60px] text-center leading-[17px]">17:45<br />22.06.2021</time>
      <button aria-label="Показать рабочий стол" className="ml-[7px] h-full w-[15px] border border-[#0d2140] bg-linear-to-b from-[#5f7fa6] to-[#1b3a66]" />
    </footer>
  );
}

export default function App() {
  return (
    <div className={`flex min-h-screen flex-col bg-[#f0f0f0] text-black ${UI}`}>
      <TitleBar />
      <MenuBar />
      <Toolbar />
      <Workspace />
      <ChartTabs />
      <Terminal />
      <div className="grow" />
      <StatusBar />
      <Taskbar />
    </div>
  );
}
